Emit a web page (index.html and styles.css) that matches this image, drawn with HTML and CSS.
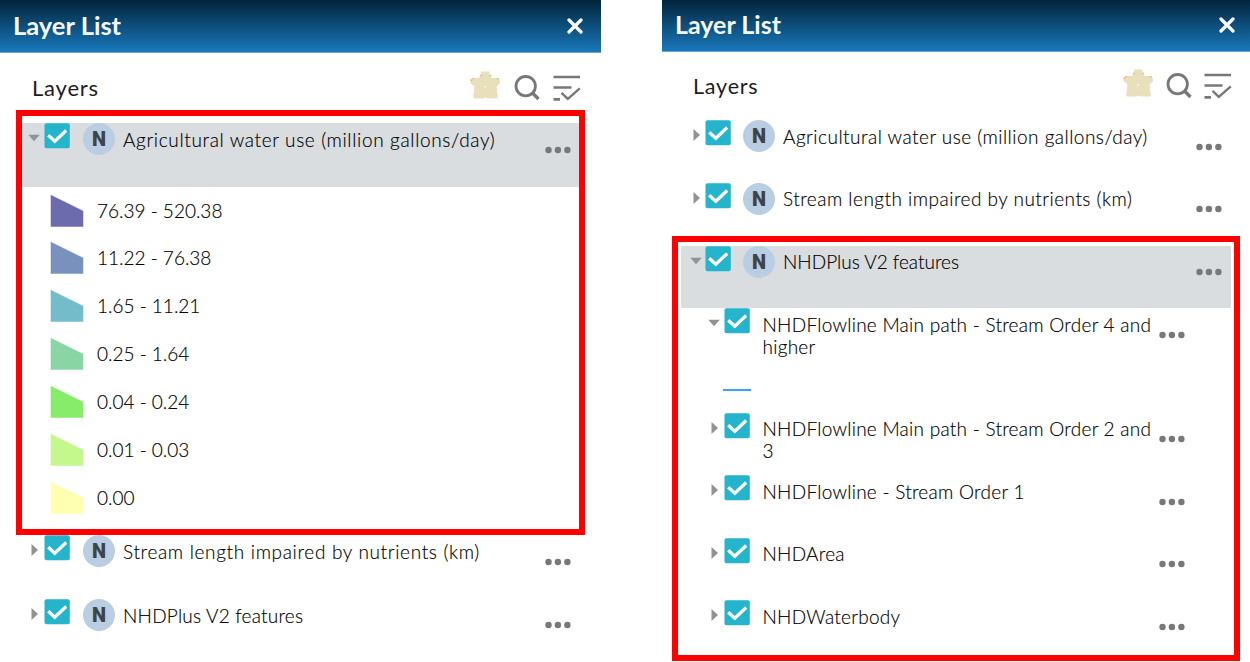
FILE: index.html
```html
<!DOCTYPE html>
<html lang="en">
<head>
<meta charset="utf-8">
<title>Layer List</title>
<link rel="stylesheet" href="styles.css">
</head>
<body>
<svg class="defs" aria-hidden="true">
  <symbol id="close" viewBox="0 0 16 16"><path d="M2 2l12 12M14 2L2 14" stroke="#fff" stroke-width="3.2" stroke-linecap="round"/></symbol>
  <symbol id="star" viewBox="0 0 30 28"><path d="M11 .5H19.500V3.500L21.500 7H28.500L30 10V12L26.500 15.500V21L27 22V27.500H17.500L15.500 26.500L13.500 27.500H4V22L4.500 21V15.500L.5 12V8.500L2.500 7H9L11 3.500Z" fill="#e8dfbb"/><path d="M4.500 16.500V22L3.800 23V27M26.500 16.500V22L27.200 23V27" stroke="#fbd9c0" stroke-width="1" fill="none"/><path d="M.5 9.300H2M2.500 7.800H4M27 7.800H28.500M10 4.500H11.500M19.500 4.500H21" stroke="#f9ad77" stroke-width="1.500"/><rect x="14.600" y="15" width="1.500" height="1.500" fill="#fff"/></symbol>
  <symbol id="search" viewBox="0 0 26 26"><circle cx="11.700" cy="11.200" r="9.700" fill="none" stroke="#787878" stroke-width="2.800"/><path d="M18.500 18l6 6" stroke="#787878" stroke-width="3.400"/></symbol>
  <symbol id="filter" viewBox="0 0 28 27"><path d="M.5 2h26.500M.5 12.500h18M.5 24.300h6.500" stroke="#787878" stroke-width="2.700"/><path d="M8.500 17.800l6.300 6L26.800 13.300" fill="none" stroke="#787878" stroke-width="2.400"/></symbol>
  <symbol id="check" viewBox="0 0 26 26"><rect x=".5" y=".3" width="25.300" height="25" rx="2" fill="#24b4cc"/><path d="M4.200 12.200l6.600 6L22.200 7.500" fill="none" stroke="#fff" stroke-width="3.200"/></symbol>
  <symbol id="dots" viewBox="0 0 26 8"><circle cx="3.500" cy="4" r="3.200"/><circle cx="12.900" cy="4" r="3.200"/><circle cx="22.400" cy="4" r="3.200"/></symbol>
  <symbol id="right" viewBox="0 0 12 12"><path d="M3.500 0L10 6l-6.500 6z" fill="#929292"/></symbol>
  <symbol id="down" viewBox="0 0 12 12"><path d="M.3 2.700h11.500L6 9.300z" fill="#929292"/></symbol>
  <symbol id="poly" viewBox="0 0 34 34"><path d="M1 1.200L33 17v15.500H1z" fill="currentColor" stroke="currentColor" stroke-opacity=".45" stroke-width="1.200"/></symbol>
</svg>
<main class="page">
  <section class="panel left">
    <header class="titlebar"><h1>Layer List</h1><svg class="close"><use href="#close"/></svg></header>
    <div class="toolbar"><h2>Layers</h2><svg class="star"><use href="#star"/></svg><svg class="search"><use href="#search"/></svg><svg class="filter"><use href="#filter"/></svg></div>
    <div class="highlight">
      <div class="layer selected"><svg class="arrow"><use href="#down"/></svg><svg class="check"><use href="#check"/></svg><span class="badge">N</span><span class="label agri">Agricultural water use (million gallons/day)</span><svg class="dots"><use href="#dots"/></svg></div>
      <ul class="legend">
        <li><svg class="c1"><use href="#poly"/></svg>76.39 - 520.38</li>
        <li><svg class="c2"><use href="#poly"/></svg>11.22 - 76.38</li>
        <li><svg class="c3"><use href="#poly"/></svg>1.65 - 11.21</li>
        <li><svg class="c4"><use href="#poly"/></svg>0.25 - 1.64</li>
        <li><svg class="c5"><use href="#poly"/></svg>0.04 - 0.24</li>
        <li><svg class="c6"><use href="#poly"/></svg>0.01 - 0.03</li>
        <li><svg class="c7"><use href="#poly"/></svg>0.00</li>
      </ul>
    </div>
    <div class="layer"><svg class="arrow"><use href="#right"/></svg><svg class="check"><use href="#check"/></svg><span class="badge">N</span><span class="label stream">Stream length impaired by nutrients (km)</span><svg class="dots"><use href="#dots"/></svg></div>
    <div class="layer"><svg class="arrow"><use href="#right"/></svg><svg class="check"><use href="#check"/></svg><span class="badge">N</span><span class="label nhd">NHDPlus V2 features</span><svg class="dots"><use href="#dots"/></svg></div>
  </section>
  <section class="panel right">
    <header class="titlebar"><h1>Layer List</h1><svg class="close"><use href="#close"/></svg></header>
    <div class="toolbar"><h2>Layers</h2><svg class="star"><use href="#star"/></svg><svg class="search"><use href="#search"/></svg><svg class="filter"><use href="#filter"/></svg></div>
    <div class="layer"><svg class="arrow"><use href="#right"/></svg><svg class="check"><use href="#check"/></svg><span class="badge">N</span><span class="label agri">Agricultural water use (million gallons/day)</span><svg class="dots"><use href="#dots"/></svg></div>
    <div class="layer"><svg class="arrow"><use href="#right"/></svg><svg class="check"><use href="#check"/></svg><span class="badge">N</span><span class="label stream">Stream length impaired by nutrients (km)</span><svg class="dots"><use href="#dots"/></svg></div>
    <div class="highlight">
      <div class="layer selected"><svg class="arrow"><use href="#down"/></svg><svg class="check"><use href="#check"/></svg><span class="badge">N</span><span class="label nhd">NHDPlus V2 features</span><svg class="dots"><use href="#dots"/></svg></div>
      <div class="layer sub"><svg class="arrow"><use href="#down"/></svg><svg class="check"><use href="#check"/></svg><span class="label flow">NHDFlowline Main path - Stream Order 4 and<br>higher</span><svg class="dots"><use href="#dots"/></svg></div>
      <div class="line-legend"><i></i></div>
      <div class="layer sub"><svg class="arrow"><use href="#right"/></svg><svg class="check"><use href="#check"/></svg><span class="label flow">NHDFlowline Main path - Stream Order 2 and<br>3</span><svg class="dots"><use href="#dots"/></svg></div>
      <div class="layer sub"><svg class="arrow"><use href="#right"/></svg><svg class="check"><use href="#check"/></svg><span class="label flow">NHDFlowline - Stream Order 1</span><svg class="dots"><use href="#dots"/></svg></div>
      <div class="layer sub"><svg class="arrow"><use href="#right"/></svg><svg class="check"><use href="#check"/></svg><span class="label flow">NHDArea</span><svg class="dots"><use href="#dots"/></svg></div>
      <div class="layer sub"><svg class="arrow"><use href="#right"/></svg><svg class="check"><use href="#check"/></svg><span class="label flow">NHDWaterbody</span><svg class="dots"><use href="#dots"/></svg></div>
    </div>
  </section>
</main>
</body>
</html>
```
FILE: styles.css
```css
* { box-sizing: border-box; }
body { margin: 0; background: #fff; color: #000; font-family: Lato, "Open Sans", sans-serif; font-size: 19px; font-weight: 300; overflow: hidden; }
h1, h2, ul { margin: 0; padding: 0; }
svg { display: block; flex: none; }
.defs { display: none; }
.page { display: flex; gap: 61px; width: 1250px; height: 662px; }
.panel { display: flex; flex-direction: column; flex: none; }
.left { width: 601px; }
.right { width: 588px; }

.titlebar { display: flex; justify-content: space-between; height: 53px; padding: 0 18px 0 13px; background: linear-gradient(#02243b, #1978bb); border-bottom: 1px solid #63a5d5; }
.right .titlebar { height: 52px; padding-right: 15.500px; }
h1 { color: #f5f8fa; font-size: 25.500px; font-weight: 700; line-height: 50px; letter-spacing: 0; }
.right h1 { font-size: 25px; line-height: 49px; }
.close { width: 16px; height: 16px; margin-top: 18px; }
.right .close { margin-top: 17px; }

.toolbar { display: flex; height: 57px; padding: 18px 20px 0 32px; }
.right .toolbar { height: 68px; padding: 17px 18px 0 31px; }
h2 { flex: 1; font-size: 22px; font-weight: 400; line-height: 34px; letter-spacing: .8px; color: #1d1d1d; }
.right h2 { font-size: 21.500px; }
.star { width: 30px; height: 28px; margin-right: 14px; }
.right .star { margin-right: 13px; }
.search { width: 26px; height: 26px; margin: 4px 13px 0 0; }
.right .search { margin-right: 12px; }
.filter { width: 28px; height: 27px; margin-top: 4px; }

.highlight { border: 6px solid #f00; }
.left .highlight { width: 569px; height: 425px; margin-left: 16px; padding-top: 7px; }
.right .highlight { width: 568px; height: 425px; margin: -9px 0 0 10px; padding: 3.500px 3px 0; }

.layer { display: flex; height: 63.500px; padding-left: 28px; }
.right .layer { height: 62.500px; padding-left: 28px; }
.highlight .selected { background: #d9dde0; padding-left: 6px; }
.right .highlight .selected { padding-left: 9px; }
.right .highlight .sub { padding-left: 27px; }
.arrow { width: 12px; height: 12px; margin: 9px 4px 0 0; }
.right .arrow { margin-right: 3px; }
.check { width: 26px; height: 26px; margin-right: 13px; }
.right .check { margin-right: 12px; }
.badge { flex: none; width: 32px; height: 32px; border-radius: 50%; background: #b9cee2; color: #3f4346; text-align: center; font: 900 20px/32px Roboto, sans-serif; }
.label { width: 422px; margin-left: 8px; padding-top: 6px; line-height: 22px; white-space: nowrap; -webkit-text-stroke: .15px #000; }
.dots { width: 26px; height: 8px; margin-top: 22.500px; fill: #787878; }
.right .label { width: 413px; padding-top: 5.500px; }
.right .sub .label { width: 396.500px; margin-left: .5px; }
.right .sub .arrow { margin-right: 4px; }
.agri { letter-spacing: .65px; }
.stream { letter-spacing: .67px; }
.nhd { letter-spacing: .22px; }
.flow { letter-spacing: .26px; }
.right .agri { letter-spacing: .48px; }
.right .stream { letter-spacing: .48px; }
.right .nhd { letter-spacing: 0; }

.legend { list-style: none; padding: 7px 0 0 28px; }
.legend li { display: flex; height: 47.850px; line-height: 33px; letter-spacing: 0; -webkit-text-stroke: .15px #000; }
.legend svg { width: 34px; height: 34px; margin-right: 13px; }
.c1 { color: #6b6bad; }
.c2 { color: #7891bd; }
.c3 { color: #75bccb; }
.c4 { color: #89d5a3; }
.c5 { color: #86ec6a; }
.c6 { color: #c4f78c; }
.c7 { color: #ffffb1; }

.line-legend { height: 42px; padding: 18px 0 0 42px; }
.line-legend i { display: block; width: 28px; height: 2px; background: #3aa5f7; }
```
